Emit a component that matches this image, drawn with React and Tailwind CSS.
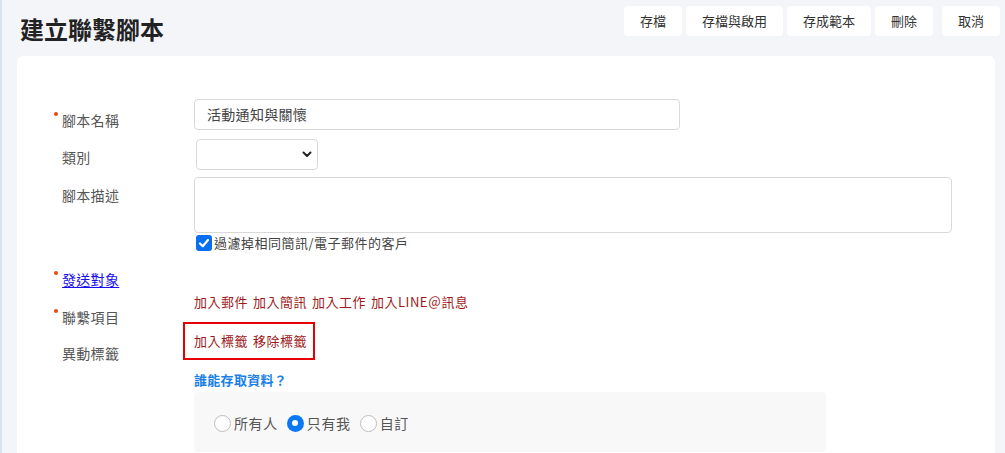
const font = { fontFamily: '"Noto Sans CJK TC", "Noto Sans", sans-serif' };

function Label({ required, children, className = "" }) {
  return (
    <div className={`w-[140px] shrink-0 flex items-start ${className}`}>
      <span className={`mt-[2px] h-[4px] w-[4px] rounded-full ${required ? "bg-[#f0480a]" : "bg-transparent"}`} />
      <span className="ml-[4px] text-[14px] leading-5 tracking-[0.3px] text-[#555]">{children}</span>
    </div>
  );
}

function Radio({ checked, label }) {
  return (
    <label className="flex items-center mr-[9px]">
      {checked ? (
        <span className="flex h-[17px] w-[17px] items-center justify-center rounded-full bg-[#0a78f5]">
          <span className="h-[6px] w-[6px] rounded-full bg-white" />
        </span>
      ) : (
        <span className="h-[17px] w-[17px] rounded-full border border-[#bdbdbd] bg-white" />
      )}
      <span className="ml-[3px] text-[14px] tracking-[0.6px] text-[#555]">{label}</span>
    </label>
  );
}

export default function App() {
  const buttons = ["存檔", "存檔與啟用", "存成範本", "刪除", "取消"];
  return (
    <div className="min-h-[453px] bg-[#f4f5f9] border-l-2 border-[#d6e5f1]" style={font}>
      <div className="flex justify-between h-[56px]">
        <h1 className="pl-[18px] pt-[13px] text-[24px] leading-8 font-bold text-[#222]">建立聯繫腳本</h1>
        <div className="flex pt-[6px] pr-[5px]">
          {buttons.map((b, i) => (
            <button
              key={b}
              className={`h-[30px] rounded-[4px] bg-white px-4 text-[13px] text-[#333] ${i === 0 ? "" : i === 4 ? "ml-[9px]" : "ml-[4px]"}`}
            >
              {b}
            </button>
          ))}
        </div>
      </div>

      <div className="ml-[15px] mr-[10px] rounded-t-[6px] bg-white pt-[43px] pl-[37px] pb-10">
        <div className="flex">
          <Label required className="pt-[11px]">腳本名稱</Label>
          <div className="flex h-[31px] w-[486px] items-center rounded-[4px] border border-[#d9d9d9] px-3 text-[14px] tracking-[0.3px] text-[#444]">
            活動通知與關懷
          </div>
        </div>

        <div className="flex mt-[9px]">
          <Label className="pt-[8px]">類別</Label>
          <div className="ml-[2px] flex h-[31px] w-[122px] items-center justify-end rounded-[4px] border border-[#d9d9d9] pr-[5px]">
            <svg width="10" height="7" viewBox="0 0 10 7">
              <path d="M1.5 1.5 L5 5 L8.5 1.5" fill="none" stroke="#222" strokeWidth="2" strokeLinecap="round" strokeLinejoin="round" />
            </svg>
          </div>
        </div>

        <div className="flex mt-[7px]">
          <Label className="pt-[8px]">腳本描述</Label>
          <div>
            <div className="h-[56px] w-[758px] rounded-[4px] border border-[#d9d9d9]" />
            <div className="mt-[2px] ml-[2px] flex items-center h-[16px]">
              <span className="flex h-[16px] w-[16px] items-center justify-center rounded-[3px] bg-[#0a6ef0]">
                <svg width="12" height="12" viewBox="0 0 12 12">
                  <path d="M2 6.5 L4.8 9.2 L10 3" fill="none" stroke="white" strokeWidth="2.2" strokeLinecap="round" strokeLinejoin="round" />
                </svg>
              </span>
              <span className="ml-[2px] -mt-[1px] text-[13px] tracking-[0.5px] text-[#444]">過濾掉相同簡訊/電子郵件的客戶</span>
            </div>
          </div>
        </div>

        <div className="flex mt-[18px] items-start">
          <div className="w-[140px] shrink-0">
            <div className="flex items-start">
              <span className="mt-[2px] h-[4px] w-[4px] rounded-full bg-[#f0480a]" />
              <a className="ml-[4px] text-[14px] leading-5 tracking-[0.3px] text-[#1a0dee] underline underline-offset-2">發送對象</a>
            </div>
            <Label required className="mt-[18px]">聯繫項目</Label>
            <Label className="mt-[16px]">異動標籤</Label>
          </div>
          <div className="pt-[24px]">
            <div className="flex gap-[5px] text-[13px] leading-[18px] tracking-[0.5px] text-[#a01818]">
              <span>加入郵件</span>
              <span>加入簡訊</span>
              <span>加入工作</span>
              <span>加入LINE＠訊息</span>
            </div>
            <div className="-ml-[11px] mt-[11px] flex h-[38px] w-[132px] items-center gap-[5px] border-2 border-[#e80000] pl-[9px] text-[13px] tracking-[0.5px] text-[#a01818]">
              <span>加入標籤</span>
              <span>移除標籤</span>
            </div>
            <div className="mt-[11px] text-[13px] leading-[18px] font-bold tracking-[0.3px] text-[#1a7fe6]">誰能存取資料？</div>
            <div className="mt-[3px] flex h-[60px] w-[632px] items-center rounded-[4px] bg-[#f8f8f8] pl-[20px] pt-[2px]">
              <Radio label="所有人" />
              <Radio checked label="只有我" />
              <Radio label="自訂" />
            </div>
          </div>
        </div>
      </div>
    </div>
  );
}
